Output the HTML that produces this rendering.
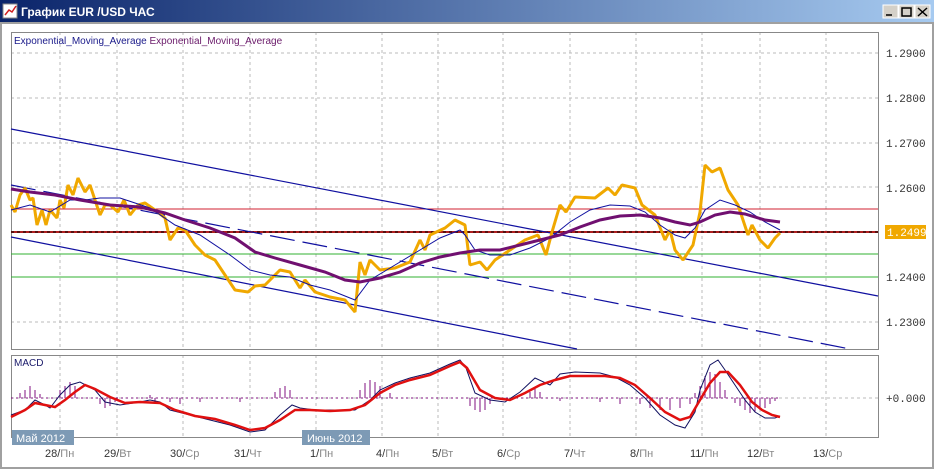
<!DOCTYPE html>
<html><head><meta charset="utf-8"><style>
body{margin:0;width:934px;height:469px;overflow:hidden;background:#fff;font-family:"Liberation Sans","DejaVu Sans",sans-serif}
</style></head><body>
<svg width="934" height="469" xmlns="http://www.w3.org/2000/svg" style="position:absolute;left:0;top:0">
<defs><linearGradient id="tb" x1="0" x2="1"><stop offset="0" stop-color="#0a246a"/><stop offset="1" stop-color="#a6caf0"/></linearGradient></defs>
<rect x="0" y="0" width="934" height="469" fill="#fff"/>
<rect x="0" y="0" width="934" height="22" fill="url(#tb)"/>
<rect x="1" y="23" width="932" height="445" fill="none" stroke="#a0a0a0" stroke-width="2"/>
<rect x="3" y="4" width="14" height="14" fill="#fff" stroke="#888"/>
<path d="M5 15 L9 10 L12 12 L16 6" stroke="#d02020" fill="none" stroke-width="1.5"/>
<text x="21" y="16" font-size="12" font-weight="bold" fill="#fff">График EUR /USD  ЧАС</text>
<g fill="#d4d0c8" stroke="#fff"><rect x="883" y="5" width="15" height="13"/><rect x="899" y="5" width="15" height="13"/><rect x="915" y="5" width="15" height="13"/></g>
<path d="M886 15h6M902 8h9v8h-9z M918 8l9 8M927 8l-9 8" stroke="#000" stroke-width="1.5" fill="none"/>
<g stroke="#bbb" stroke-dasharray="3,3" stroke-width="1">
<path d="M60 32V349M117 32V349M183 32V349M250 32V349M316 32V349M382 32V349M438 32V349M503 32V349M570 32V349M636 32V349M702 32V349M760 32V349M826 32V349"/>
<path d="M60 355V437M117 355V437M183 355V437M250 355V437M316 355V437M382 355V437M438 355V437M503 355V437M570 355V437M636 355V437M702 355V437M760 355V437M826 355V437"/>
<path d="M11 53H878M11 98H878M11 143H878M11 187H878M11 277H878M11 322H878M11 398H878"/>
</g>
<rect x="11.5" y="32.5" width="867" height="317" fill="none" stroke="#888"/>
<rect x="11.5" y="355.5" width="867" height="82" fill="none" stroke="#888"/>
<text x="14" y="44" font-size="10" fill="#1a1a8a">Exponential_Moving_Average <tspan fill="#6a1a6a">Exponential_Moving_Average</tspan></text>
<path d="M11 209H878" stroke="#d02030"/>
<path d="M11 232H878" stroke="#b02020" stroke-width="2"/>
<path d="M11 232H878" stroke="#000" stroke-dasharray="3,3"/>
<path d="M11 254H878M11 277H878" stroke="#30b030"/>
<path d="M11 129L878 296" stroke="#1010a0" stroke-width="1.2"/>
<path d="M11 237L577 349" stroke="#1010a0" stroke-width="1.2"/>
<path d="M11 185L850 349" stroke="#1010a0" stroke-width="1.2" stroke-dasharray="25,8"/>
<polyline fill="none" stroke="#f0a800" stroke-width="3" stroke-linejoin="bevel" points="11,205 15,212 20,195 25,188 30,200 33,198 37,225 42,210 46,225 50,210 57,218 60,200 64,208 68,185 73,195 78,178 85,192 90,185 95,200 100,215 105,205 110,205 118,212 124,200 130,215 138,205 145,203 155,210 165,218 170,240 178,228 185,230 195,245 205,255 215,260 225,275 235,290 248,292 255,286 265,285 275,275 280,270 290,272 300,288 305,280 315,292 330,297 345,300 355,312 360,262 365,275 370,260 380,270 395,268 410,262 420,240 425,250 430,235 445,228 455,220 465,225 470,265 480,262 487,270 495,260 510,250 525,240 538,235 546,255 552,232 560,205 566,212 575,197 595,198 608,188 615,195 622,185 635,188 642,205 655,215 665,240 670,230 675,250 683,260 693,245 700,212 705,165 712,172 720,168 728,190 738,205 748,235 752,225 760,240 768,248 775,238 780,233"/>
<polyline fill="none" stroke="#1010a0" stroke-width="1" points="11,210 30,205 50,212 70,200 85,200 100,198 120,198 150,208 175,225 200,235 230,255 250,270 270,275 290,277 310,285 330,290 355,300 370,280 395,265 420,250 440,238 460,230 465,235 475,250 490,255 510,255 530,248 550,238 570,222 590,210 610,205 630,206 645,212 660,225 675,235 685,238 695,228 705,210 720,200 735,205 750,212 765,222 780,230"/>
<polyline fill="none" stroke="#701070" stroke-width="3" points="11,189 30,192 55,195 80,200 110,205 140,207 165,213 185,220 210,228 235,238 255,252 275,258 300,265 325,272 345,280 360,282 380,278 400,272 420,263 440,257 460,253 480,250 500,250 520,245 540,240 560,235 580,227 600,220 620,216 640,215 660,218 675,222 690,225 700,222 715,215 730,212 745,214 765,220 780,222"/>
<g font-size="11" fill="#333" font-family="Liberation Mono,DejaVu Sans Mono,monospace">
<text x="886" y="57">1.2900</text><text x="886" y="102">1.2800</text><text x="886" y="147">1.2700</text><text x="886" y="192">1.2600</text><text x="886" y="281">1.2400</text><text x="886" y="326">1.2300</text>
<text x="886" y="402">+0.000</text>
</g>
<rect x="885" y="225" width="41" height="14" fill="#f0a800"/>
<text x="887" y="236" font-size="11" fill="#fff" font-family="Liberation Mono,monospace">1.2499</text>
<text x="14" y="366" font-size="10" fill="#1a1a6a">MACD</text>
<g stroke="#801080" stroke-width="1">
<path d="M20 398v-5M25 398v-8M30 398v-12M35 398v-8M40 398v-4M60 398v-8M65 398v-12M70 398v-16M75 398v-12M100 398v6M105 398v10M110 398v8M115 398v4M150 398v-3M155 398v4M170 398v4M180 398v6M200 398v4M240 398v4M275 398v-6M280 398v-10M285 398v-12M290 398v-8M360 398v-8M365 398v-15M370 398v-18M375 398v-16M380 398v-12M390 398v-5M470 398v8M475 398v12M480 398v14M485 398v12M490 398v6M530 398v-6M535 398v-9M540 398v-6M560 398v3M600 398v4M620 398v6M640 398v6M650 398v10M660 398v12M670 398v12M680 398v10M690 398v6M695 398v-5M700 398v-12M705 398v-22M710 398v-26M715 398v-24M720 398v-16M725 398v-8M735 398v5M740 398v8M745 398v12M750 398v15M755 398v14M760 398v12M765 398v10M770 398v6M775 398v3"/>
<path d="M11 398H780" stroke-dasharray="2,3"/>
</g>
<polyline fill="none" stroke="#101060" stroke-width="1" points="11,415 25,410 35,400 45,405 50,408 60,395 70,385 80,382 95,390 105,402 120,405 140,402 150,400 160,402 170,410 190,415 210,420 230,425 250,432 265,430 280,415 292,405 300,408 315,410 340,410 355,410 370,400 380,390 395,383 410,378 430,373 450,364 460,360 466,368 475,393 490,400 505,402 520,392 535,378 550,385 560,374 575,372 600,373 615,377 630,385 645,398 660,415 675,425 685,428 695,412 700,390 710,365 718,360 725,370 735,385 745,400 755,412 765,418 775,418 780,416"/>
<polyline fill="none" stroke="#e01010" stroke-width="2.5" points="11,417 25,410 35,403 45,405 55,407 65,400 75,392 85,385 95,389 110,397 125,403 140,402 160,403 175,410 195,416 215,419 235,425 250,430 265,428 280,420 295,410 310,410 330,411 350,410 365,405 380,393 395,385 410,380 430,375 450,366 460,362 467,368 480,390 495,398 510,400 525,393 540,385 555,380 570,376 590,376 605,376 620,378 635,385 650,398 665,412 680,420 690,417 700,400 710,383 720,372 728,372 740,385 752,402 762,410 772,415 780,417"/>
<rect x="12" y="430" width="62" height="15" fill="#7d9ab5"/>
<text x="16" y="442" font-size="11" fill="#fff">Май 2012</text>
<rect x="302" y="430" width="68" height="15" fill="#7d9ab5"/>
<text x="307" y="442" font-size="11" fill="#fff">Июнь 2012</text>
<g font-size="11" fill="#333">
<text x="45" y="457">28/<tspan fill="#888">Пн</tspan></text><text x="104" y="457">29/<tspan fill="#888">Вт</tspan></text><text x="170" y="457">30/<tspan fill="#888">Ср</tspan></text><text x="234" y="457">31/<tspan fill="#888">Чт</tspan></text><text x="310" y="457">1/<tspan fill="#888">Пн</tspan></text><text x="376" y="457">4/<tspan fill="#888">Пн</tspan></text><text x="432" y="457">5/<tspan fill="#888">Вт</tspan></text><text x="497" y="457">6/<tspan fill="#888">Ср</tspan></text><text x="564" y="457">7/<tspan fill="#888">Чт</tspan></text><text x="630" y="457">8/<tspan fill="#888">Пн</tspan></text><text x="690" y="457">11/<tspan fill="#888">Пн</tspan></text><text x="747" y="457">12/<tspan fill="#888">Вт</tspan></text><text x="813" y="457">13/<tspan fill="#888">Ср</tspan></text>
</g>
</svg>
</body></html>
